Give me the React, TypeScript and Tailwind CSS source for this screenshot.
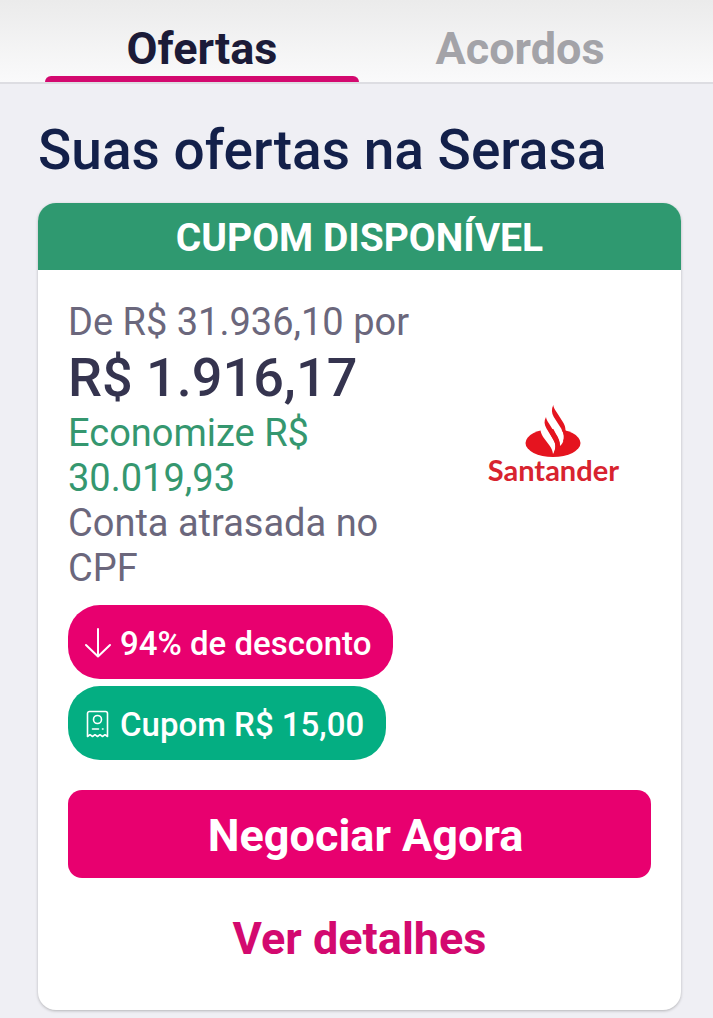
import React, { useState } from 'react'

const tabs = ['Ofertas', 'Acordos']

const ArrowDown = () => (
  <svg width="28" height="32" viewBox="0 0 28 32" fill="none" stroke="currentColor" strokeWidth="2" strokeLinecap="round" strokeLinejoin="round" aria-hidden="true">
    <path d="M14 1v27M2 17l12 11.500L26 17" />
  </svg>
)

const CouponIcon = () => (
  <svg width="28" height="32" viewBox="0 0 28 32" fill="none" stroke="currentColor" strokeWidth="1.6" strokeLinecap="round" strokeLinejoin="round" aria-hidden="true">
    <path d="M3.500 27.500V4.500a2 2 0 0 1 2-2h16a2 2 0 0 1 2 2v23l-2.500-1.800-2.500 1.800-2.500-1.800-2.500 1.800-2.500-1.800-2.500 1.800-2.500-1.800z" />
    <circle cx="13.500" cy="10.500" r="4" />
    <path d="M8.500 20h6M18.500 20h.5" />
  </svg>
)

const SantanderLogo = () => (
  <div className="flex flex-col items-center text-[#d8232f]">
    <svg width="56" height="53" viewBox="0 0 56 53" aria-hidden="true">
      <ellipse cx="28" cy="38" rx="27.500" ry="14" fill="#e5141f" />
      {/* gaps between the flames */}
      <path fill="#fff" d="M16 19C14.500 25 16 28.500 18.500 32.500L24.500 40.500C26.500 43.500 27.500 45.500 28 49C31 44 31 39 28.500 35L21 21Z" />
      <path fill="#fff" d="M23 14L31 29C33.500 33 35 36 35 41C38.800 37.500 39.800 33 38.500 28.500L30 12Z" />
      {/* flames */}
      <path
        fill="#e5141f"
        d="M21 12C18.800 16 19.200 19.500 21.500 23.500L28.500 35C31 39 31.200 43.500 28.800 48L34.800 43C35.300 38.500 34 35 32 31.500L24 18.500C22.300 15.800 21.200 14 21 12Z"
      />
      <path
        fill="#e5141f"
        d="M28.300 0C26.300 4 26.500 8 28.800 12L36.500 24C39 28.500 39.500 32.500 37.800 37L43 33L40.500 25C40.300 22 39.800 20.500 38.500 18L31.500 7C29.500 4 28.500 2.500 28.300 0Z"
      />
    </svg>
    <span className="font-[Lato,sans-serif] text-[29px] leading-6 font-bold">Santander</span>
  </div>
)

const App = () => {
  const [activeTab, setActiveTab] = useState('Ofertas')

  return (
    <div className="min-h-screen bg-[#efeff4] pb-2 font-[Roboto,sans-serif]">
      {/* Tabs */}
      <nav className="flex h-21 gap-1 border-b-2 border-[#dddde2] bg-linear-to-b from-[#ebebeb] to-[#fafafb] pr-9 pl-[45px]">
        {tabs.map(tab => (
          <button
            key={tab}
            onClick={() => setActiveTab(tab)}
            className={`flex flex-1 flex-col items-center justify-between pt-[25px] text-[45px] font-bold ${
              activeTab === tab ? 'text-[#1b1b38]' : 'text-[#a3a3a8]'
            }`}
          >
            <span className="leading-12">{tab}</span>
            <span className={`h-1.5 w-full rounded-t-md ${activeTab === tab ? 'bg-[#d3096f]' : ''}`} />
          </button>
        ))}
      </nav>

      <main className="px-8 pt-9 sm:pr-8 sm:pl-[38px]">
        <h1 className="text-[55px] leading-15 font-medium text-[#13204a]">Suas ofertas na Serasa</h1>

        {/* Offer card */}
        <section className="mt-[23px] overflow-hidden rounded-[18px] bg-white shadow-[0_1px_3px_rgba(0,0,0,0.25)]">
          <h2 className="bg-[#2f9970] pt-[14px] pb-[10px] text-center text-[39px] leading-[43px] font-bold text-white">
            CUPOM DISPONÍVEL
          </h2>

          <div className="px-[30px] pt-[30px] pb-7">
            <div className="flex items-center justify-between">
              <div className="w-[350px] text-[38px] leading-[45px] text-[#6b677c]">
                <p>De R$ 31.936,10 por</p>
                <p className="text-[54px] leading-[66px] font-medium text-[#35344f]">R$ 1.916,17</p>
                <p className="text-[#35976f]">Economize R$ 30.019,93</p>
                <p>Conta atrasada no CPF</p>
              </div>
              <div className="pr-8 pb-1">
                <SantanderLogo />
              </div>
            </div>

            <div className="mt-[14px] flex flex-col items-start gap-[7px] text-[33px] font-medium text-white">
              <span className="flex h-[74px] items-center gap-2 rounded-[32px] bg-[#e8006f] pt-1 pr-[22px] pl-4">
                <ArrowDown />
                94% de desconto
              </span>
              <span className="flex h-[74px] items-center gap-2 rounded-[32px] bg-[#04ae82] pt-1 pr-[22px] pl-4">
                <CouponIcon />
                Cupom R$ 15,00
              </span>
            </div>

            <button className="mt-[30px] h-22 w-full rounded-[14px] bg-[#e8006f] pt-1 pl-3 text-[45px] font-bold text-white">
              Negociar Agora
            </button>
            <button className="mt-4 h-22 w-full pt-0.5 text-[45px] font-bold text-[#d3096f]">
              Ver detalhes
            </button>
          </div>
        </section>
      </main>
    </div>
  )
}

export default App
